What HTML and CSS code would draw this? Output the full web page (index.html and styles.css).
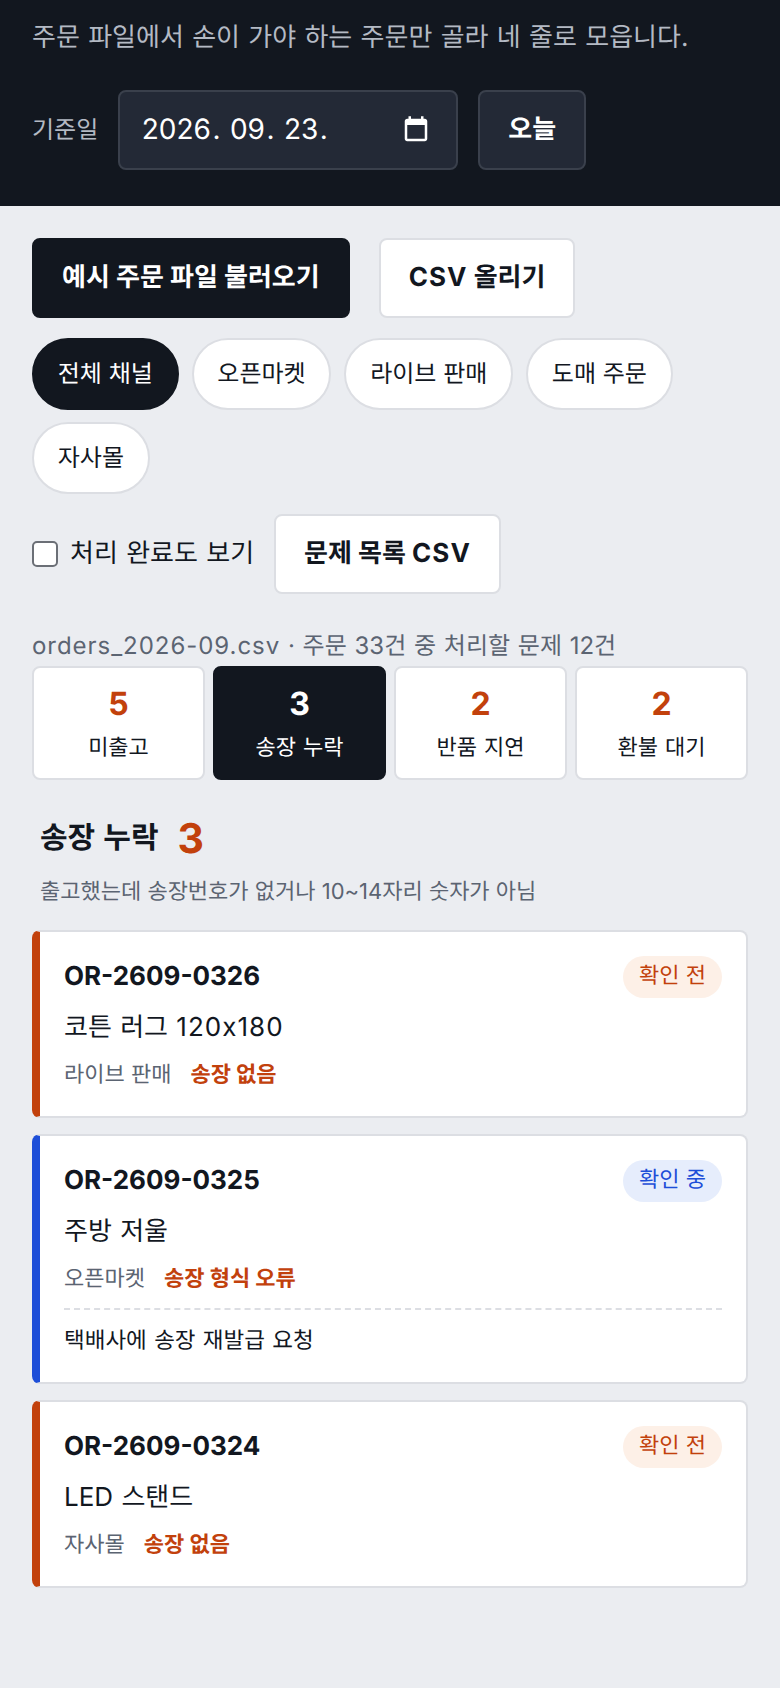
FILE: index.html
```html
<!DOCTYPE html>
<html lang="ko">
<head>
    <meta name="viewport" content="width=device-width, initial-scale=1.0">
    <link rel="stylesheet" href="styles.css">
</head>

<body>
    <div class="header">
        <p class="intro">주문 파일에서 손이 가야 하는 주문만 골라 네 줄로 모읍니다.</p>
        <div class="date-row">
            <span class="date-label">기준일</span>
            <div class="date-input">
                <span class="date-text"><span>2026</span>. <span>09</span>. <span>23</span>.</span>
                <svg class="date-icon" viewBox="0 0 24 24" width="30" height="30" fill="#fff">
                    <path d="M19 3h-1V1h-2v2H8V1H6v2H5c-1.1 0-2 .9-2 2v14c0 1.1.9 2 2 2h14c1.1 0 2-.9 2-2V5c0-1.1-.9-2-2-2zm0 16H5V8h14v11z"/>
                </svg>
            </div>
            <button class="btn btn-ghost">오늘</button>
        </div>
    </div>

    <div class="container">
        <div class="file-actions">
            <button class="btn btn-dark">예시 주문 파일 불러오기</button>
            <button class="btn btn-light"><span class="latin">CSV</span> 올리기</button>
        </div>

        <div class="chips">
            <button class="chip active">전체 채널</button>
            <button class="chip">오픈마켓</button>
            <button class="chip">라이브 판매</button>
            <button class="chip">도매 주문</button>
            <button class="chip">자사몰</button>
        </div>

        <div class="tools">
            <label class="check">
                <input type="checkbox">
                <span>처리 완료도 보기</span>
            </label>
            <button class="btn btn-light">문제 목록 <span class="latin">CSV</span></button>
        </div>

        <p class="summary"><span class="latin">orders_2026-09.csv</span> · 주문 33건 중 처리할 문제 12건</p>

        <div class="stats">
            <div class="stat">
                <div class="stat-value">5</div>
                <div class="stat-label">미출고</div>
            </div>
            <div class="stat active">
                <div class="stat-value">3</div>
                <div class="stat-label">송장 누락</div>
            </div>
            <div class="stat">
                <div class="stat-value">2</div>
                <div class="stat-label">반품 지연</div>
            </div>
            <div class="stat">
                <div class="stat-value">2</div>
                <div class="stat-label">환불 대기</div>
            </div>
        </div>

        <div class="section-head">
            <h2 class="section-title">송장 누락</h2>
            <span class="section-count">3</span>
        </div>
        <p class="section-desc">출고했는데 송장번호가 없거나 10~14자리 숫자가 아님</p>

        <div class="orders">
            <div class="order">
                <div class="order-top">
                    <span class="order-id">OR-2609-0326</span>
                    <span class="badge">확인 전</span>
                </div>
                <div class="order-name">코튼 러그 <span class="latin">120x180</span></div>
                <div class="order-meta">
                    <span>라이브 판매</span>
                    <span class="issue">송장 없음</span>
                </div>
            </div>

            <div class="order doing">
                <div class="order-top">
                    <span class="order-id">OR-2609-0325</span>
                    <span class="badge">확인 중</span>
                </div>
                <div class="order-name">주방 저울</div>
                <div class="order-meta">
                    <span>오픈마켓</span>
                    <span class="issue">송장 형식 오류</span>
                </div>
                <div class="order-note">택배사에 송장 재발급 요청</div>
            </div>

            <div class="order">
                <div class="order-top">
                    <span class="order-id">OR-2609-0324</span>
                    <span class="badge">확인 전</span>
                </div>
                <div class="order-name">LED 스탠드</div>
                <div class="order-meta">
                    <span>자사몰</span>
                    <span class="issue">송장 없음</span>
                </div>
            </div>
        </div>
    </div>
</body>
</html>
```

FILE: styles.css
```css
* {
    margin: 0;
    padding: 0;
    box-sizing: border-box;
    text-rendering: geometricPrecision;
}

:root {
    --ink: #12171f;
    --line: #dcdee3;
    --muted: #5b6472;
    --orange: #c2410c;
    --blue: #1d4ed8;
}

body {
    background: #ebedf1;
    min-height: 100vh;
    color: var(--ink);
    font-family: Inter, "Noto Sans CJK KR", sans-serif;
    font-size: 26px;
    line-height: 1.4;
    word-spacing: 1px;
}

button {
    font-family: inherit;
    color: inherit;
    line-height: 1.4;
    cursor: pointer;
}

.latin {
    letter-spacing: 0.04em;
}

.header {
    background: var(--ink);
    padding: 20px 32px 36px;
    height: 206px;
}

.intro {
    color: #b4bac4;
    font-size: 26px;
    line-height: 36px;
}

.date-row {
    display: flex;
    align-items: center;
    gap: 20px;
    margin-top: 34px;
}

.date-label {
    color: #b4bac4;
    font-size: 24px;
}

.date-input {
    display: flex;
    align-items: center;
    justify-content: space-between;
    width: 340px;
    height: 80px;
    padding: 0 25px 0 20px;
    background: #232936;
    border: 2px solid #3a404c;
    border-radius: 8px;
    color: #fff;
    font-size: 28px;
    word-spacing: 0;
}

.date-text span {
    padding: 0 1.5px;
}

.btn {
    height: 80px;
    padding: 0 28px;
    border-radius: 8px;
    font-size: 26px;
    font-weight: 700;
}

.btn-ghost {
    background: #232936;
    border: 2px solid #3a404c;
    color: #fff;
}

.btn-dark {
    background: var(--ink);
    border: 2px solid var(--ink);
    color: #fff;
}

.btn-light {
    background: #fff;
    border: 2px solid var(--line);
}

.container {
    padding: 32px 32px 0;
}

.file-actions {
    display: flex;
    gap: 29px;
}

.chips {
    display: flex;
    flex-wrap: wrap;
    gap: 12px 13px;
    margin-top: 20px;
}

.chip {
    height: 72px;
    padding: 0 23.75px;
    background: #fff;
    border: 2px solid var(--line);
    border-radius: 999px;
    font-size: 24px;
}

.chip.active {
    background: var(--ink);
    border-color: var(--ink);
    color: #fff;
}

.tools {
    display: flex;
    align-items: center;
    gap: 20px;
    margin-top: 20px;
}

.check {
    display: flex;
    align-items: center;
    gap: 12px;
}

.check input {
    appearance: none;
    width: 26px;
    height: 26px;
    background: #fff;
    border: 2px solid #6b6f76;
    border-radius: 5px;
}

.summary {
    margin-top: 32px;
    color: var(--muted);
    font-size: 24px;
    line-height: 40px;
}

.stats {
    display: grid;
    grid-template-columns: repeat(4, 1fr);
    gap: 8px;
}

.stat {
    height: 114px;
    padding-top: 14px;
    background: #fff;
    border: 2px solid var(--line);
    border-radius: 8px;
    text-align: center;
}

.stat.active {
    background: var(--ink);
    border-color: var(--ink);
    color: #fff;
}

.stat-value {
    color: var(--orange);
    font-size: 32px;
    font-weight: 700;
    line-height: 44px;
}

.stat.active .stat-value {
    color: #fff;
}

.stat-label {
    margin-top: 6px;
    font-size: 22px;
    line-height: 32px;
}

.section-head {
    display: flex;
    align-items: center;
    gap: 19px;
    margin-top: 30px;
    padding-left: 8px;
}

.section-title {
    font-size: 30px;
    font-weight: 700;
    line-height: 56px;
}

.section-count {
    color: var(--orange);
    font-size: 41px;
    font-weight: 700;
    line-height: 56px;
}

.section-desc {
    margin-top: 10px;
    padding-left: 8px;
    color: var(--muted);
    font-size: 22px;
    line-height: 32px;
    word-spacing: 0;
}

.orders {
    display: flex;
    flex-direction: column;
    gap: 16px;
    margin-top: 22px;
}

.order {
    padding: 24px;
    background: #fff;
    border: 2px solid var(--line);
    border-left: 8px solid var(--orange);
    border-radius: 8px;
}

.order.doing {
    border-left-color: var(--blue);
}

.order-top {
    display: flex;
    align-items: center;
    justify-content: space-between;
}

.order-id {
    font-size: 26px;
    font-weight: 700;
}

.badge {
    height: 42px;
    padding: 0 16px;
    background: #fdf0e7;
    border-radius: 999px;
    color: var(--orange);
    font-size: 22px;
    line-height: 40px;
    word-spacing: 0;
}

.doing .badge {
    background: #e6edfc;
    color: var(--blue);
}

.order-name {
    margin-top: 10px;
    font-size: 26px;
    line-height: 40px;
}

.order-meta {
    display: flex;
    gap: 19px;
    margin-top: 10px;
    color: var(--muted);
    font-size: 22px;
    line-height: 34px;
    word-spacing: 0;
}

.issue {
    color: var(--orange);
    font-weight: 700;
}

.order-note {
    margin-top: 12px;
    padding-top: 13px;
    border-top: 2px dashed var(--line);
    font-size: 22.5px;
    line-height: 35px;
}
```
